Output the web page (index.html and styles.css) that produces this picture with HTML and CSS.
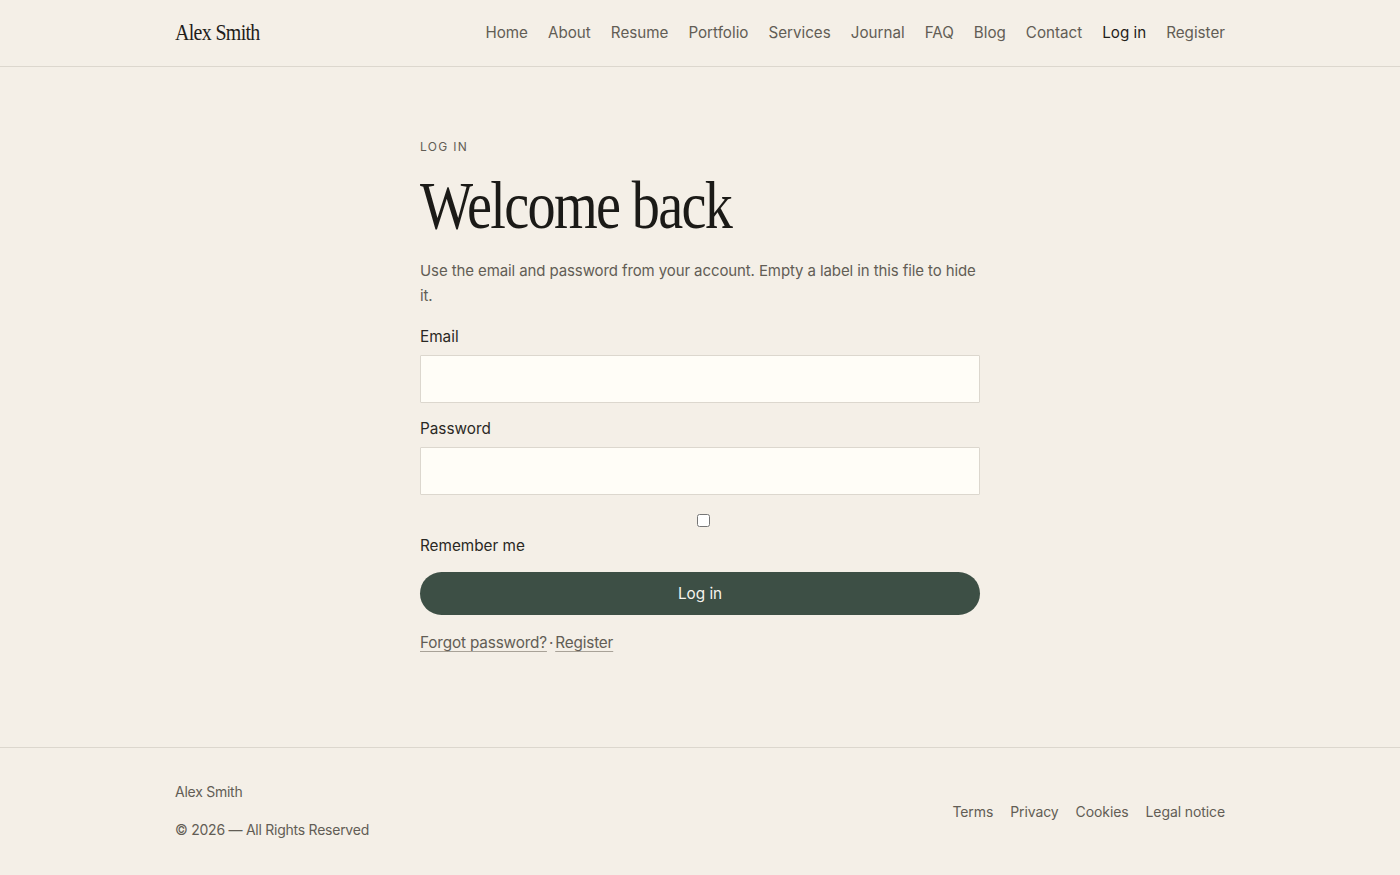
FILE: index.html
```html
<!DOCTYPE html>
<html lang="en">
<head>
<meta charset="utf-8">
<title>Log in — Alex Smith</title>
<link rel="stylesheet" href="styles.css">
</head>
<body>
<header class="site-header">
  <div class="wrap header-inner">
    <a class="logo" href="#">Alex Smith</a>
    <nav class="nav">
      <a href="#">Home</a>
      <a href="#">About</a>
      <a href="#">Resume</a>
      <a href="#">Portfolio</a>
      <a href="#">Services</a>
      <a href="#">Journal</a>
      <a href="#">FAQ</a>
      <a href="#">Blog</a>
      <a href="#">Contact</a>
      <a href="#" class="current">Log in</a>
      <a href="#">Register</a>
    </nav>
  </div>
</header>
<main class="main">
  <section class="auth">
    <p class="eyebrow">LOG IN</p>
    <h1 class="title">Welcome back</h1>
    <p class="lead">Use the email and password from your account. Empty a label in this file to hide it.</p>
    <form class="form">
      <label class="field">
        <span class="label">Email</span>
        <input type="email" class="input">
      </label>
      <label class="field">
        <span class="label">Password</span>
        <input type="password" class="input">
      </label>
      <label class="remember">
        <span class="check-row"><input type="checkbox" class="check"></span>
        <span class="label">Remember me</span>
      </label>
      <button type="button" class="btn">Log in</button>
    </form>
    <p class="links"><a href="#">Forgot password?</a>·<a href="#">Register</a></p>
  </section>
</main>
<footer class="site-footer">
  <div class="wrap footer-inner">
    <div class="footer-left">
      <p class="footer-name">Alex Smith</p>
      <p class="footer-copy">© 2026 — All Rights Reserved</p>
    </div>
    <nav class="footer-nav">
      <a href="#">Terms</a>
      <a href="#">Privacy</a>
      <a href="#">Cookies</a>
      <a href="#">Legal notice</a>
    </nav>
  </div>
</footer>
</body>
</html>
```

FILE: styles.css
```css
* { box-sizing: border-box; }
html, body { margin: 0; padding: 0; }
body {
  background: #f4efe7;
  color: #2a2824;
  font-family: Inter, "Noto Sans", sans-serif;
  min-height: 100vh;
  display: flex;
  flex-direction: column;
}
a { color: inherit; text-decoration: none; }
p { margin: 0; }

.wrap { width: 1050px; margin: 0 auto; }

.site-header { border-bottom: 1px solid #dcd7ce; }
.header-inner {
  height: 66px;
  padding-bottom: 1px;
  display: flex;
  align-items: center;
  justify-content: space-between;
}
.logo {
  font-family: "Liberation Serif", serif;
  font-size: 24px;
  letter-spacing: -0.8px;
  color: #1f1d1a;
  display: inline-block;
  transform: scaleX(0.83);
  transform-origin: left center;
}
.nav { display: flex; gap: 20px; font-size: 15.2px; }
.nav a { color: #625d55; }
.nav a.current { color: #1f1d1a; }

.main { flex: 1; }
.auth { width: 560px; margin: 0 auto; padding: 72px 0 60px; }
.eyebrow {
  font-size: 12px;
  letter-spacing: 1.3px;
  color: #625d55;
  line-height: 16px;
}
.title {
  margin: 14px 0 17px;
  font-family: "Liberation Serif", serif;
  font-weight: 400;
  font-size: 67px;
  line-height: 72px;
  letter-spacing: -2px;
  color: #1b1a17;
  display: inline-block;
  transform: scaleX(0.84);
  transform-origin: left center;
  white-space: nowrap;
}
.lead {
  font-size: 15px;
  letter-spacing: -0.1px;
  line-height: 25px;
  color: #625d55;
}
.form { margin-top: 18px; display: flex; flex-direction: column; }
.field { display: flex; flex-direction: column; margin-bottom: 15px; }
.label { font-size: 15.3px; line-height: 22px; color: #2a2824; }
.input {
  margin-top: 7px;
  height: 48px;
  width: 100%;
  background: #fffdf7;
  border: 1px solid #dcd7ce;
  border-radius: 1px;
  font: inherit;
}
.remember { display: flex; flex-direction: column; margin-top: 0; }
.check-row { display: flex; justify-content: center; height: 20px; align-items: center; }
.check { margin: 0 0 0 6px; width: 13px; height: 13px; }
.remember .label { margin-top: 5px; }
.btn {
  margin-top: 15px;
  height: 43px;
  border: none;
  border-radius: 22px;
  background: #3d4f45;
  color: #f7f4ee;
  font: inherit;
  font-size: 15.3px;
}
.links {
  margin-top: 17px;
  font-size: 15.3px;
  line-height: 22px;
  letter-spacing: -0.15px;
  color: #625d55;
}
.links a { text-decoration: underline; text-underline-offset: 3px; text-decoration-color: #a8a298; margin: 0 2px; }
.links a:first-child { margin-left: 0; }

.site-footer { border-top: 1px solid #dcd7ce; height: 128px; }
.footer-inner {
  display: flex;
  justify-content: space-between;
  align-items: center;
  padding-top: 34px;
}
.footer-left { font-size: 14px; color: #625d55; line-height: 20px; letter-spacing: -0.25px; }
.footer-copy { margin-top: 18px; }
.footer-nav { display: flex; gap: 17px; font-size: 14px; color: #625d55; letter-spacing: -0.1px; }
```
